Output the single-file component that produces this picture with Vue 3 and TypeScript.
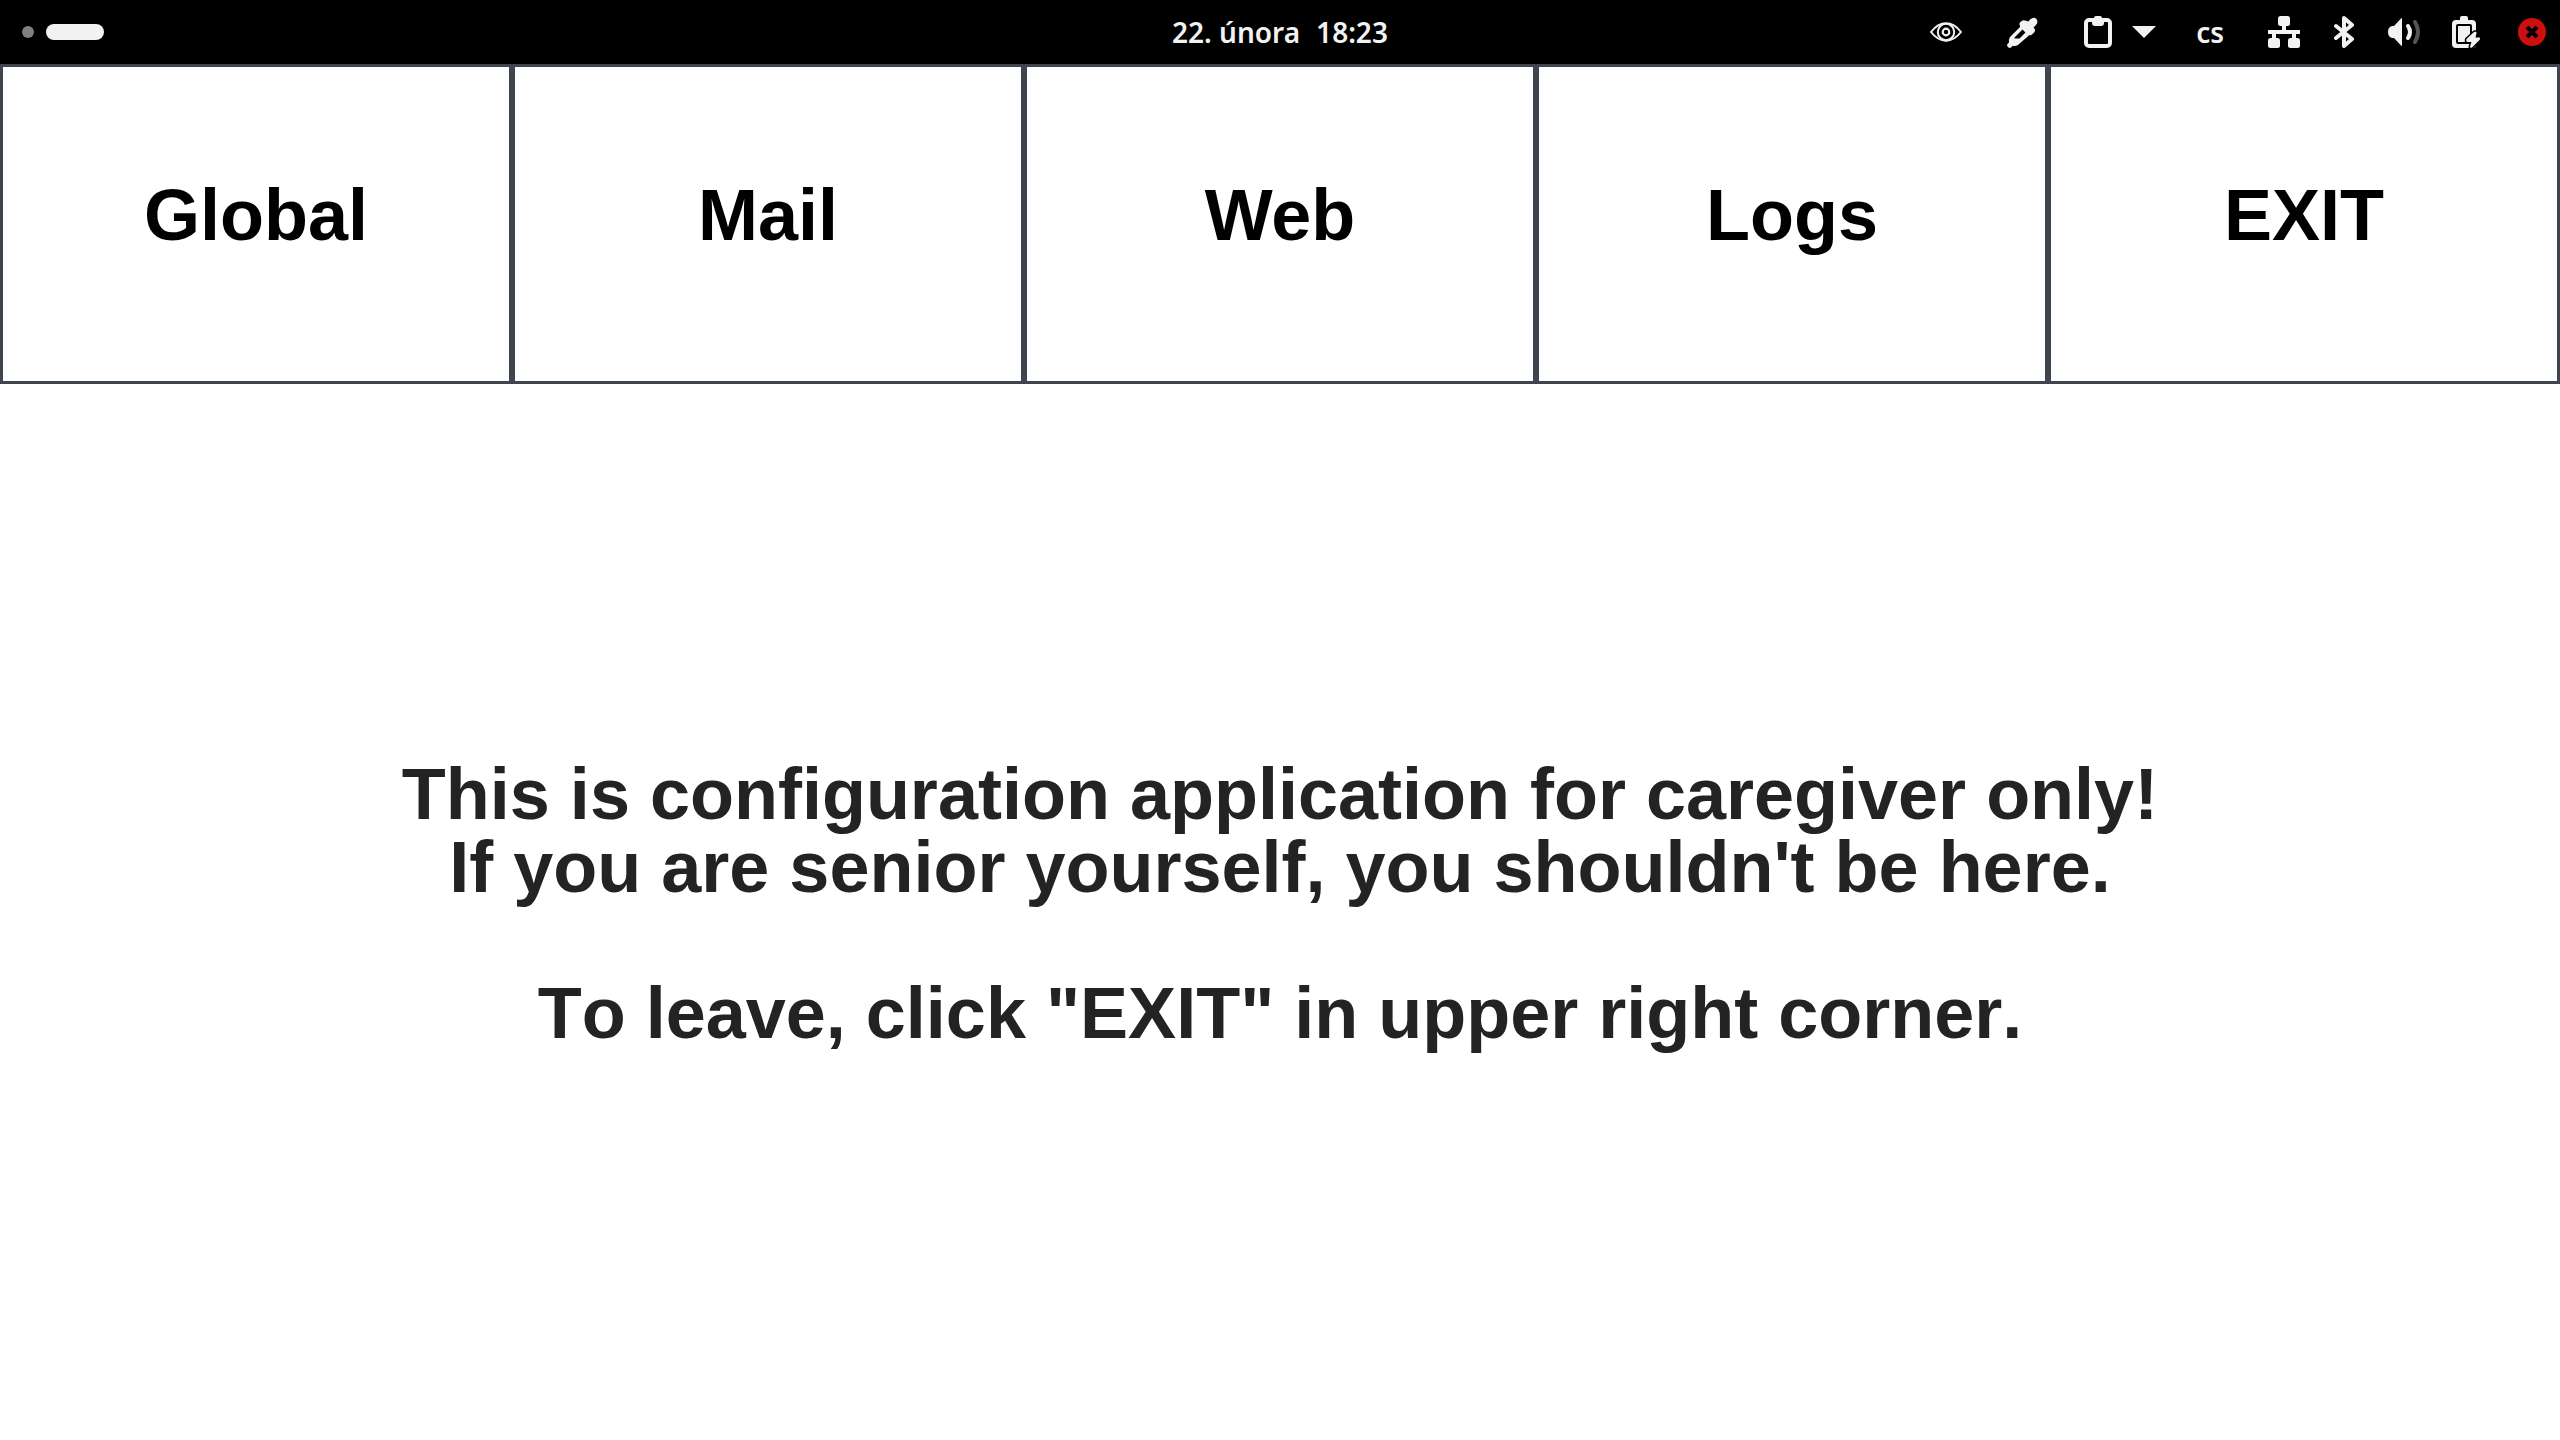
<script setup lang="ts">
const sections: string[] = ['Global', 'Mail', 'Web', 'Logs', 'EXIT']
</script>

<template>
  <div class="desktop">
    <header class="panel">
      <button class="workspaces" type="button" aria-label="Workspaces">
        <span class="dot"></span>
        <span class="pill"></span>
      </button>

      <button class="clock" type="button">
        <span>22. února</span>
        <span>18:23</span>
      </button>

      <div class="tray">
        <div class="applets">
          <button type="button" aria-label="Eye">
            <svg viewBox="0 0 32 32" fill="none" stroke="currentColor" stroke-width="2">
              <path d="M1 16C6 9.500 11 7.300 16 7.300S26 9.500 31 16C26 22.500 21 24.700 16 24.700S6 22.500 1 16Z" />
              <circle cx="16" cy="16" r="8.200" />
              <circle cx="16" cy="16" r="3.300" stroke-width="2.200" />
            </svg>
          </button>
          <button type="button" aria-label="Color picker">
            <svg viewBox="0 0 32 32" fill="currentColor">
              <path
                fill-rule="evenodd"
                d="M22.500 5.500L24 3.500Q27.500 0.500 30.500 3Q32.500 6 30 9L27.500 11.500L29 13.500Q29.500 16 27 17.500Q25.500 19.800 23.500 19L12.500 28.500Q11 30 6.500 30L5 31.500Q3.500 32.500 2 31Q0.500 29.500 1.500 28L3 26.500Q2.500 23.500 4 21L14 11V9.500Q12.500 7.500 14.500 6Q16.500 3.500 19 4.500ZM16.500 13.500L8.500 21.500V22.500H13.500L19.500 16.500Z"
              />
            </svg>
          </button>
          <button class="clipboard" type="button" aria-label="Clipboard">
            <svg viewBox="0 0 32 32" fill="none">
              <rect x="4" y="4" width="24" height="26" rx="3" stroke="currentColor" stroke-width="4" />
              <path d="M12 2Q12 0 14 0H18Q20 0 20 2H22V7Q22 10 19 10H13Q10 10 10 7V2Z" fill="currentColor" />
            </svg>
            <svg viewBox="0 0 32 32" fill="currentColor">
              <path d="M4 10H28L16 22Z" />
            </svg>
          </button>
        </div>

        <button class="keyboard" type="button">cs</button>

        <button class="system" type="button" aria-label="System">
          <svg viewBox="0 0 32 32" fill="currentColor">
            <rect x="10" width="12" height="10" rx="2.500" />
            <path d="M14 9H18V14H32V18H28V23H24V18H8V23H4V18H0V14H14Z" />
            <rect y="22" width="12" height="10" rx="2.500" />
            <rect x="20" y="22" width="12" height="10" rx="2.500" />
          </svg>
          <svg
            viewBox="0 0 32 32"
            fill="none"
            stroke="currentColor"
            stroke-width="4"
            stroke-linecap="round"
            stroke-linejoin="round"
          >
            <path d="M8 10L24 23L16 30V2L24 9L8 22" />
          </svg>
          <svg viewBox="0 0 32 32" fill="none" stroke-width="4" stroke-linecap="round">
            <path d="M4 10H6L13 2.500L14 2V30L13 29.500L6 22H4Q0 21 0 16T4 10Z" fill="currentColor" />
            <path d="M20 10Q24 16 20 22" stroke="currentColor" />
            <path d="M27 6Q33 16 27 26" stroke="#555" />
          </svg>
          <svg viewBox="0 0 32 32">
            <path d="M12 4V2Q12 0 14 0H18Q20 0 20 2V4H24Q28 4 28 8V28Q28 32 24 32H8Q4 32 4 28V8Q4 4 8 4Z" fill="currentColor" />
            <rect x="9" y="9" width="14" height="18" rx="1" fill="none" stroke="#000" stroke-width="2" />
            <path
              d="M26 16L18.500 23Q17.500 26 20 26H23.500L22 30.500Q22 32.500 24 31.500L31.500 24Q33 21.500 31 21.500H27.500L28.500 17Q28.500 15 26 16Z"
              fill="currentColor"
              stroke="#000"
              stroke-width="3"
              paint-order="stroke"
            />
          </svg>
        </button>

        <button type="button" aria-label="Close">
          <svg viewBox="0 0 32 32">
            <circle cx="16" cy="16" r="14" fill="#cc0f0f" />
            <path d="M11 11L21 21M21 11L11 21" stroke="#000" stroke-width="4" />
          </svg>
        </button>
      </div>
    </header>

    <nav class="menu">
      <button v-for="section in sections" :key="section" type="button">{{ section }}</button>
    </nav>

    <main class="message">
      <p>
        This is configuration application for caregiver only!<br />
        If you are senior yourself, you shouldn't be here.
      </p>
      <p>To leave, click "EXIT" in upper right corner.</p>
    </main>
  </div>
</template>

<style>
body {
  margin: 0;
  background: #fff;
}
</style>

<style scoped>
.desktop {
  display: flex;
  flex-direction: column;
  min-height: 100vh;
}

button {
  margin: 0;
  padding: 0;
  border: 0;
  background: none;
  color: inherit;
  font: inherit;
}

svg {
  display: block;
  width: 32px;
  height: 32px;
}

.panel {
  display: grid;
  grid-template-columns: 1fr auto 1fr;
  align-items: center;
  height: 64px;
  background: #000;
  color: #f2f2f2;
  font: 600 28px/40px 'Noto Sans', sans-serif;
}

.workspaces {
  display: flex;
  align-items: center;
  justify-self: start;
  gap: 12px;
  padding-left: 22px;
}

.dot {
  width: 12px;
  height: 12px;
  border-radius: 6px;
  background: #808080;
}

.pill {
  width: 58px;
  height: 16px;
  border-radius: 8px;
  background: #f2f2f2;
}

.clock {
  display: flex;
  gap: 16px;
}

.tray {
  display: flex;
  align-items: center;
  justify-self: end;
  gap: 36px;
  padding-right: 12px;
}

.applets {
  display: flex;
  gap: 44px;
}

.clipboard {
  display: flex;
  gap: 14px;
}

.keyboard {
  padding-right: 8px;
}

.system {
  display: flex;
  gap: 28px;
}

.menu {
  display: grid;
  grid-template-columns: repeat(5, 1fr);
}

.menu button {
  height: 320px;
  padding-bottom: 18px;
  border: 3px solid #3e454c;
  background: #fff;
  color: #000;
  font: bold 72px/73px 'Liberation Sans', sans-serif;
}

.message {
  display: flex;
  flex: 1;
  flex-direction: column;
  align-items: center;
  justify-content: center;
  gap: 73px;
  padding-bottom: 16px;
  color: #232323;
  font: bold 72px/73px 'Liberation Sans', sans-serif;
  font-kerning: none;
  text-align: center;
}

.message p {
  margin: 0;
}
</style>
